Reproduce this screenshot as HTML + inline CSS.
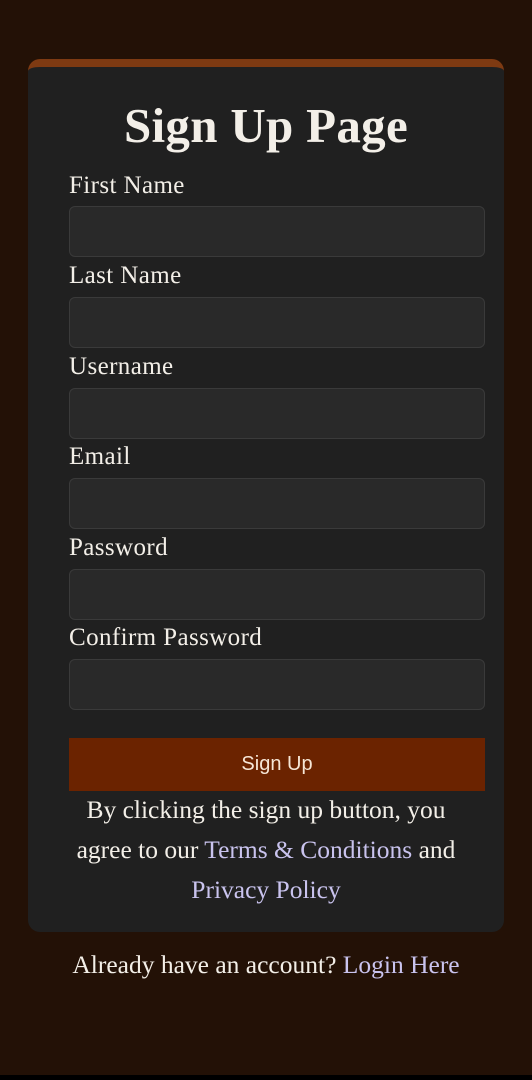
<!DOCTYPE html>
<html><head><meta charset="utf-8"><style>
*{margin:0;padding:0;box-sizing:border-box}
body{width:532px;height:1080px;background:#231106;position:relative;overflow:hidden;font-family:"Liberation Serif",serif;color:#f3efe8}
.card{position:absolute;left:28px;top:59px;width:476px;height:873px;background:#202020;border-radius:12px;border-top:8px solid #7e3a12}
.t{position:absolute;left:0;width:532px;text-align:center;white-space:nowrap}
h1{position:absolute;left:0;width:532px;text-align:center;top:97px;font-size:49px;font-weight:bold;line-height:58px;letter-spacing:0.3px}
.l{position:absolute;left:69px;font-size:25px;line-height:28px;letter-spacing:0.4px}
.i{position:absolute;left:69px;width:416px;height:51px;background:#292929;border:1px solid #3a3a3a;border-radius:6px}
.b{position:absolute;left:69px;top:738px;width:416px;height:53px;background:#6b2300;color:#f6e6d6;font-family:"Liberation Sans",sans-serif;font-size:20px;text-align:center;line-height:53px}
.p{font-size:25.5px;line-height:40px}
a{color:#c9c3ee;text-decoration:none}
.bot{position:absolute;left:0;top:1075px;width:532px;height:5px;background:#000}
</style></head><body>
<div class="card"></div>
<h1>Sign Up Page</h1>
<div class="l" style="top:172px">First Name</div><div class="i" style="top:206px"></div>
<div class="l" style="top:262px">Last Name</div><div class="i" style="top:297px"></div>
<div class="l" style="top:353px">Username</div><div class="i" style="top:388px"></div>
<div class="l" style="top:443px">Email</div><div class="i" style="top:478px"></div>
<div class="l" style="top:534px">Password</div><div class="i" style="top:569px"></div>
<div class="l" style="top:624px">Confirm Password</div><div class="i" style="top:659px"></div>
<div class="b">Sign Up</div>
<div class="t p" style="top:790px">By clicking the sign up button, you<br>agree to our <a>Terms &amp; Conditions</a> and<br><a>Privacy Policy</a></div>
<div class="t p" style="top:945px">Already have an account? <a>Login Here</a></div>
<div class="bot"></div>
</body></html>
